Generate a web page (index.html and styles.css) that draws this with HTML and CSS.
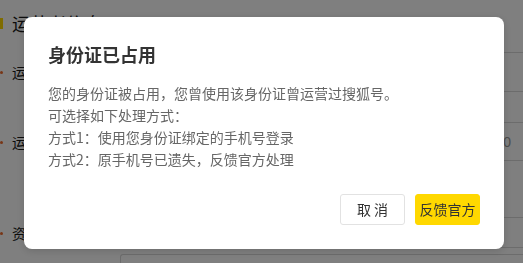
FILE: index.html
```html
<!DOCTYPE html>
<html lang="zh-CN">
<head>
<meta charset="utf-8">
<title>身份证已占用</title>
<link rel="stylesheet" href="styles.css">
</head>
<body>
<div class="page">
  <div class="section-title"><span class="bar"></span><span class="section-text">运营者信息</span></div>
  <div class="row row-1">
    <div class="label">运营者姓名</div>
    <div class="input"></div>
  </div>
  <div class="row row-2">
    <div class="label">运营者身份证</div>
    <div class="input"><span class="counter">0</span></div>
  </div>
  <div class="row row-3">
    <div class="label">资质证明</div>
    <div class="hint"></div>
  </div>
  <div class="row row-4">
    <div class="label"></div>
    <div class="upload"></div>
  </div>
</div>

<div class="overlay">
  <div class="modal">
    <h2 class="modal-title">身份证已占用</h2>
    <div class="modal-body">
      <p>您的身份证被占用，您曾使用该身份证曾运营过搜狐号。</p>
      <p>可选择如下处理方式：</p>
      <p>方式1：使用您身份证绑定的手机号登录</p>
      <p>方式2：原手机号已遗失，反馈官方处理</p>
    </div>
    <div class="modal-footer">
      <button class="btn btn-cancel">取 消</button>
      <button class="btn btn-primary">反馈官方</button>
    </div>
  </div>
</div>
</body>
</html>
```

FILE: styles.css
```css
* { box-sizing: border-box; }

html, body {
  margin: 0;
  padding: 0;
  width: 523px;
  height: 263px;
  overflow: hidden;
  background: #ffffff;
  font-family: "Noto Sans CJK SC", "Noto Sans", sans-serif;
}

.page {
  padding-top: 13px;
  width: 523px;
  height: 263px;
  overflow: hidden;
}

.section-title {
  display: flex;
  align-items: center;
  height: 20px;
}

.bar {
  width: 3px;
  height: 11px;
  background: #ffd800;
}

.section-text {
  margin-left: 9px;
  font-size: 18px;
  line-height: 20px;
  color: #1a1a1a;
}

.row {
  display: flex;
  align-items: center;
}

.label {
  position: relative;
  width: 120px;
  padding-left: 12px;
  font-size: 14px;
  line-height: 20px;
  color: #1a1a1a;
  flex: none;
}

.row-1 .label::before,
.row-2 .label::before,
.row-3 .label::before {
  content: "";
  position: absolute;
  left: 0;
  top: 9px;
  width: 3px;
  height: 3px;
  border-radius: 50%;
  background: #f06a2a;
}

.row-1 { margin-top: 19px; }
.row-2 { margin-top: 30px; }
.row-3 { margin-top: 56px; }
.row-4 { margin-top: 6px; }

.input {
  width: 403px;
  height: 40px;
  border: 1px solid #d9d9d9;
  border-right: none;
  border-radius: 2px 0 0 2px;
  display: flex;
  align-items: center;
  justify-content: flex-end;
  padding-right: 12px;
}

.row-2 .input { height: 39px; }

.counter {
  font-size: 14px;
  line-height: 20px;
  color: #999;
  font-family: "Liberation Sans", sans-serif;
}

.hint {
  width: 403px;
  height: 31px;
  border-top: 1px solid #d9d9d9;
  border-bottom: 1px solid #d9d9d9;
}

.upload {
  width: 403px;
  height: 10px;
  border: 1px solid #d9d9d9;
  border-bottom: none;
  border-right: none;
  border-radius: 3px 0 0 0;
}

/* overlay + modal */
.overlay {
  position: fixed;
  inset: 0;
  background: rgba(0, 0, 0, 0.5);
  padding: 17px 0 0 24px;
}

.modal {
  width: 480px;
  height: 232px;
  background: #fff;
  border-radius: 8px;
  box-shadow: 0 2px 8px rgba(0, 0, 0, 0.15);
  padding: 25px 24px 24px 24px;
  display: flex;
  flex-direction: column;
}

.modal-title {
  margin: 0;
  font-size: 18px;
  line-height: 24px;
  font-weight: 700;
  color: #333;
}

.modal-body {
  margin-top: 16px;
  font-size: 14px;
  line-height: 22px;
  color: #666;
}

.modal-body p {
  margin: 0;
}

.modal-footer {
  margin-top: auto;
  display: flex;
  justify-content: flex-end;
  gap: 10px;
}

.btn {
  height: 31px;
  width: 65px;
  padding: 0;
  font-family: "Noto Sans CJK SC", "Noto Sans", sans-serif;
  font-size: 14px;
  line-height: 29px;
  border-radius: 3px;
  cursor: pointer;
  color: #333;
}

.btn-cancel {
  background: #fff;
  border: 1px solid #e2e2e2;
}

.btn-primary {
  background: #ffd800;
  border: 1px solid #ffd800;
  color: #333;
}
```
